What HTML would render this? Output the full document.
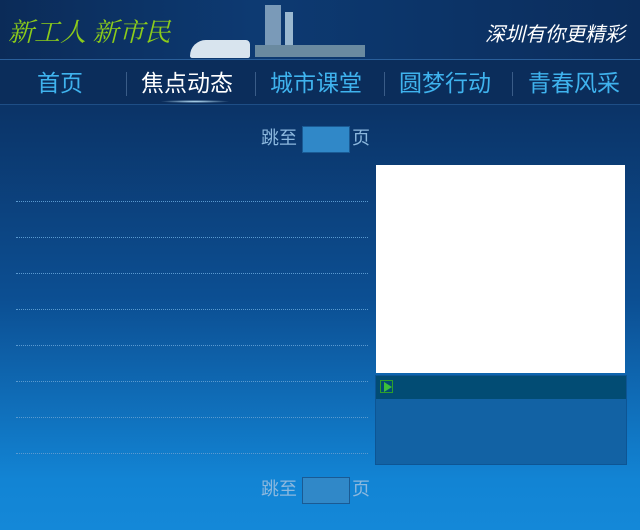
<!DOCTYPE html><html><head><meta charset="utf-8"><style>
body{margin:0;width:640px;height:530px;overflow:hidden;font-family:"Liberation Sans","Noto Sans CJK SC",sans-serif;background:linear-gradient(#0b2c5a 0px,#0b3468 110px,#0c4f93 300px,#1284d4 480px,#1488d8 530px);position:relative}
.hd{position:absolute;left:0;top:0;width:640px;height:59px;background:linear-gradient(90deg,#0b2b58,#0d3a72 40%,#0b2d5c)}
.nav{position:absolute;left:0;top:59px;width:640px;height:44px;background:#0b2d5b;border-top:1px solid #2a5f9a;border-bottom:1px solid #1e4e86}
.nav span{position:absolute;top:4px;font-size:23px;color:#3fb3ee}
.sep{position:absolute;top:12px;width:1px;height:24px;background:#3a5c88}
.dl{position:absolute;left:16px;width:352px;border-top:1px dotted #5a9ad0}
.jp{position:absolute;left:261px;font-size:18px;color:#8cb8de}
.jp i{display:inline-block;width:46px;height:25px;border:1px solid #1a5a94;background:#3088c8;vertical-align:middle;margin:0 2px 0 5px}
</style></head><body>
<div class="hd">
<div style="position:absolute;left:8px;top:12px;font-size:26px;color:#8ccc1a;font-style:italic;font-family:'Noto Serif CJK SC',serif">新工人 新市民</div>
<div style="position:absolute;left:265px;top:5px;width:16px;height:52px;background:#7a9ab8"></div>
<div style="position:absolute;left:285px;top:12px;width:8px;height:45px;background:#9ab8d0"></div>
<div style="position:absolute;left:190px;top:40px;width:60px;height:18px;border-radius:30px 8px 4px 4px;background:#d8e4ee"></div>
<div style="position:absolute;left:255px;top:45px;width:110px;height:12px;background:#6a8aa0"></div>
<div style="position:absolute;left:485px;top:18px;font-size:20px;color:#fff;font-style:italic">深圳有你更精彩</div>
</div>
<div class="nav">
<span style="left:37px">首页</span><div class="sep" style="left:126px"></div>
<span style="left:141px;color:#fff">焦点动态</span><div class="sep" style="left:255px"></div>
<span style="left:270px">城市课堂</span><div class="sep" style="left:384px"></div>
<span style="left:399px">圆梦行动</span><div class="sep" style="left:512px"></div>
<span style="left:528px">青春风采</span>
<div style="position:absolute;left:160px;top:40px;width:70px;height:3px;background:radial-gradient(#bfe8ff,transparent 70%)"></div>
</div>
<div class="jp" style="top:124px">跳至<i></i>页</div>
<div class="jp" style="top:475px">跳至<i></i>页</div>
<div class="dl" style="top:201px"></div><div class="dl" style="top:237px"></div><div class="dl" style="top:273px"></div><div class="dl" style="top:309px"></div><div class="dl" style="top:345px"></div><div class="dl" style="top:381px"></div><div class="dl" style="top:417px"></div><div class="dl" style="top:453px"></div>
<div style="position:absolute;left:376px;top:165px;width:249px;height:208px;background:#fff"></div>
<div style="position:absolute;left:375px;top:375px;width:250px;height:88px;background:#1262a4;border:1px solid #0d5594"></div>
<div style="position:absolute;left:376px;top:376px;width:250px;height:23px;background:#024c74"></div>
<div style="position:absolute;left:380px;top:380px;width:13px;height:13px;border:1px solid #2ea02a;box-sizing:border-box"><div style="position:absolute;left:3px;top:1px;border-left:8px solid #3cc03a;border-top:5px solid transparent;border-bottom:5px solid transparent"></div></div>
</body></html>
